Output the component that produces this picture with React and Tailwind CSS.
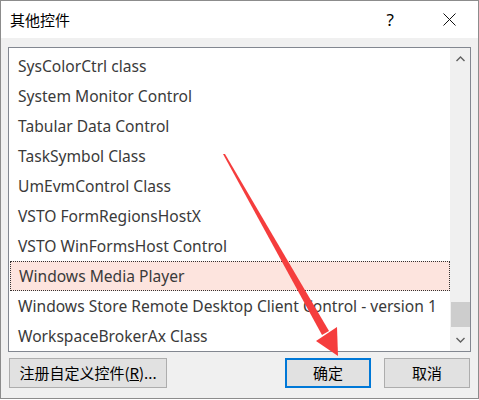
import React from 'react';

const items = [
  'SysColorCtrl class',
  'System Monitor Control',
  'Tabular Data Control',
  'TaskSymbol Class',
  'UmEvmControl Class',
  'VSTO FormRegionsHostX',
  'VSTO WinFormsHost Control',
  'Windows Media Player',
  'Windows Store Remote Desktop Client Control - version 1',
  'WorkspaceBrokerAx Class',
];

const font = { fontFamily: '"Noto Sans", "Noto Sans CJK SC", sans-serif' };
const cjk = { fontFamily: '"Noto Sans CJK SC", sans-serif' };

const App = () => {
  return (
    <div className="relative w-[479px] h-[400px] bg-white" style={font}>
      <div className="w-[479px] h-[399px] border border-[#8c8c8c] flex flex-col">
        {/* title bar */}
        <div className="h-[37px] bg-white flex items-center shrink-0">
          <span className="ml-[9px] text-[15px] text-black leading-none" style={cjk}>其他控件</span>
          <span className="ml-auto text-[17px] text-black leading-none mr-[49px]">?</span>
          <svg width="13" height="13" viewBox="0 0 13 13" className="mr-[22px]">
            <path d="M0.5 0.5 L12.5 12.5 M12.5 0.5 L0.5 12.5" stroke="#111" strokeWidth="1" />
          </svg>
        </div>

        {/* body */}
        <div className="flex-1 bg-[#f0f0f0] flex flex-col px-[7px] pt-[9px]">
          <div className="h-[305px] w-[463px] border border-[#828790] bg-white flex">
            <div className="flex-1 pt-[3px] pl-px">
              {items.map((t, i) => (
                <div
                  key={t}
                  className={`h-[30px] flex items-center pl-[8px] pt-px text-[15.6px] text-[#3a3a3a] whitespace-nowrap overflow-hidden ${
                    i === 7 ? 'bg-[#fde4de] border border-dotted border-[#333] pl-[7px]' : ''
                  }`}
                >
                  {t}
                </div>
              ))}
            </div>
            <div className="w-[20px] bg-[#f0f0f0] flex flex-col items-center">
              <div className="h-[22px] flex items-center justify-center w-full">
                <svg width="9" height="6" viewBox="0 0 9 6">
                  <path d="M0.5 5 L4.5 1 L8.5 5" stroke="#606060" strokeWidth="1.4" fill="none" />
                </svg>
              </div>
              <div className="flex-1 w-full flex flex-col justify-end">
                <div className="h-[25px] w-[19px] mx-auto bg-[#cdcdcd] mb-[2px]" />
              </div>
              <div className="h-[22px] flex items-center justify-center w-full">
                <svg width="9" height="6" viewBox="0 0 9 6">
                  <path d="M0.5 1 L4.5 5 L8.5 1" stroke="#606060" strokeWidth="1.4" fill="none" />
                </svg>
              </div>
            </div>
          </div>

          {/* buttons */}
          <div className="flex mt-[6px] h-[30px] items-stretch">
            <button className="ml-px w-[158px] bg-[#e1e1e1] border border-[#adadad] text-[15px] text-black" style={cjk}>
              注册自定义控件(<span className="underline">R</span>)...
            </button>
            <button className="ml-auto w-[86px] bg-[#e1e1e1] border-2 border-[#0078d7] text-[15px] text-black" style={cjk}>
              确定
            </button>
            <button className="ml-[13px] mr-[1px] w-[86px] bg-[#e1e1e1] border border-[#adadad] text-[15px] text-black" style={cjk}>
              取消
            </button>
          </div>
        </div>
      </div>

      {/* red annotation arrow */}
      <svg className="absolute left-0 top-0 pointer-events-none" width="479" height="400" viewBox="0 0 479 400">
        <polygon points="223,154 225,154 329,331 322,335" fill="#f53d3d" />
        <polygon points="316,341 337,327 338,356" fill="#f53d3d" />
      </svg>
    </div>
  );
};

export default App;
